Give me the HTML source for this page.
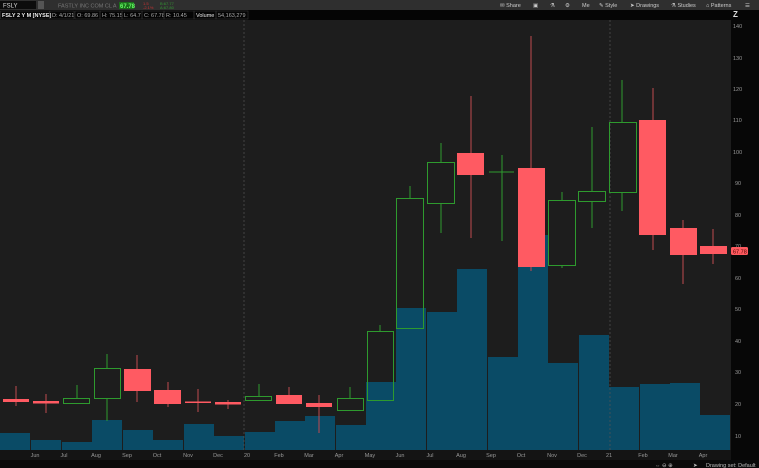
<!DOCTYPE html>
<html><head><meta charset="utf-8"><style>
html,body{margin:0;padding:0;background:#1d1d1d;width:759px;height:468px;overflow:hidden}
svg{display:block;font-family:"Liberation Sans",sans-serif}
</style></head><body>
<svg width="759" height="468" viewBox="0 0 759 468" xmlns="http://www.w3.org/2000/svg">
<rect x="0" y="0" width="759" height="468" fill="#1d1d1d"/>
<rect x="0" y="0" width="759" height="10" fill="#2f2f2f"/>
<rect x="0" y="1" width="36" height="8" fill="#0c0c0c"/>
<text x="3" y="7.5" font-size="6" fill="#ddd">FSLY</text>
<rect x="38" y="1" width="6" height="8" fill="#555"/>
<text x="58" y="7.5" font-size="5.5" fill="#777">FASTLY INC COM CL A</text>
<rect x="119" y="2" width="15" height="7" fill="#1a6e1a"/>
<text x="120" y="8" font-size="6" fill="#6f6" font-weight="bold">67.78</text>
<text x="143" y="5" font-size="4" fill="#c33">1.5</text>
<text x="143" y="9" font-size="4" fill="#c33">-2.1%</text>
<text x="160" y="5" font-size="4" fill="#393">B:67.77</text>
<text x="160" y="9" font-size="4" fill="#393">A:67.80</text>
<g font-size="5.5" fill="#ccc">
<text x="500" y="7">✉ Share</text><text x="533" y="7">▣</text><text x="550" y="7">⚗</text><text x="565" y="7">⚙</text>
<text x="582" y="7">Me</text><text x="599" y="7">✎ Style</text><text x="630" y="7">➤ Drawings</text>
<text x="671" y="7">⚗ Studies</text><text x="706" y="7">⌂ Patterns</text><text x="745" y="7">☰</text>
</g>
<rect x="0" y="10" width="759" height="10" fill="#050505"/>
<g font-size="5.5" fill="#aaa">
<text x="2" y="17" fill="#eee" font-weight="bold">FSLY 2 Y M [NYSE]</text>
<text x="52" y="17">D: 4/1/21</text><text x="77" y="17">O: 69.86</text>
<text x="102" y="17">H: 75.15</text><text x="124" y="17">L: 64.7</text>
<text x="144" y="17">C: 67.78</text><text x="166" y="17">R: 10.45</text>
<text x="196" y="17" fill="#eee">Volume</text><text x="218" y="17">54,163,279</text>
</g>
<g stroke="#333" stroke-width="0.6" fill="none">
<rect x="0.5" y="11" width="49" height="8"/><rect x="50" y="11" width="24" height="8"/><rect x="75" y="11" width="25" height="8"/><rect x="100" y="11" width="22" height="8"/><rect x="122" y="11" width="20" height="8"/><rect x="142" y="11" width="22" height="8"/><rect x="164" y="11" width="30" height="8"/><rect x="194" y="11" width="22" height="8"/><rect x="216" y="11" width="32" height="8"/>
</g>
<rect x="731" y="20" width="28" height="448" fill="#070707"/>
<text x="733" y="17" font-size="8" fill="#ddd" font-weight="bold">Z</text>
<g font-size="5.5" fill="#999">
<text x="733" y="28">140</text><text x="733" y="60">130</text><text x="733" y="91">120</text><text x="733" y="122">110</text><text x="733" y="154">100</text><text x="735" y="185">90</text><text x="735" y="217">80</text><text x="735" y="248">70</text><text x="735" y="280">60</text><text x="735" y="311">50</text><text x="735" y="343">40</text><text x="735" y="374">30</text><text x="735" y="406">20</text><text x="735" y="438">10</text>
</g>
<rect x="731" y="247" width="17" height="8" rx="1.5" fill="#ff5a5f"/>
<text x="733" y="253.5" font-size="5.5" fill="#400">67.78</text>
<g fill="#0a4b66">
<rect x="0" y="433" width="30" height="17"/><rect x="31" y="440" width="30" height="10"/><rect x="62" y="442" width="30" height="8"/><rect x="92" y="420" width="30" height="30"/><rect x="123" y="430" width="30" height="20"/><rect x="153" y="440" width="30" height="10"/><rect x="184" y="424" width="30" height="26"/><rect x="214" y="436" width="30" height="14"/><rect x="245" y="432" width="30" height="18"/><rect x="275" y="421" width="30" height="29"/><rect x="305" y="416" width="30" height="34"/><rect x="336" y="425" width="30" height="25"/><rect x="366" y="382" width="30" height="68"/>
<rect x="396" y="308" width="30" height="142"/><rect x="427" y="312" width="30" height="138"/><rect x="457" y="269" width="30" height="181"/><rect x="488" y="357" width="30" height="93"/><rect x="518" y="235" width="30" height="215"/><rect x="548" y="363" width="30" height="87"/><rect x="579" y="335" width="30" height="115"/><rect x="609" y="387" width="30" height="63"/><rect x="640" y="384" width="30" height="66"/><rect x="670" y="383" width="30" height="67"/><rect x="700" y="415" width="30" height="35"/>
</g>
<g stroke="#555" stroke-width="0.7" stroke-dasharray="2,2"><line x1="244" y1="20" x2="244" y2="450"/><line x1="610" y1="20" x2="610" y2="450"/></g>
<g stroke="#c04a50" stroke-width="1">
<line x1="16" y1="386" x2="16" y2="406"/><line x1="46" y1="394" x2="46" y2="413"/><line x1="137" y1="355" x2="137" y2="402"/><line x1="168" y1="382" x2="168" y2="407"/><line x1="198" y1="389" x2="198" y2="412"/><line x1="228" y1="400" x2="228" y2="409"/><line x1="289" y1="387" x2="289" y2="404"/><line x1="319" y1="395" x2="319" y2="433"/>
<line x1="471" y1="96" x2="471" y2="238"/><line x1="531" y1="36" x2="531" y2="271"/><line x1="653" y1="88" x2="653" y2="250"/><line x1="683" y1="220" x2="683" y2="284"/><line x1="713" y1="229" x2="713" y2="264"/>
</g>
<g fill="#ff5a62">
<rect x="3" y="399" width="26" height="3"/><rect x="33" y="401" width="26" height="2.5"/><rect x="124" y="369" width="27" height="22"/><rect x="154" y="390" width="27" height="14"/><rect x="185" y="401.5" width="26" height="1.5"/><rect x="215" y="402" width="26" height="2.5"/><rect x="276" y="395" width="26" height="9"/><rect x="306" y="403" width="26" height="4"/>
<rect x="457" y="153" width="27" height="22"/><rect x="518" y="168" width="27" height="99"/><rect x="639" y="120" width="27" height="115"/><rect x="670" y="228" width="27" height="27"/><rect x="700" y="246" width="27" height="8"/>
</g>
<g stroke="#2e9a2e" stroke-width="1" fill="none">
<line x1="77" y1="385" x2="77" y2="398"/><line x1="107" y1="354" x2="107" y2="368"/><line x1="107" y1="399" x2="107" y2="421"/><line x1="259" y1="384" x2="259" y2="396"/><line x1="350" y1="387" x2="350" y2="398"/><line x1="380" y1="325" x2="380" y2="331"/>
<line x1="410" y1="186" x2="410" y2="198"/><line x1="441" y1="143" x2="441" y2="162"/><line x1="441" y1="204" x2="441" y2="233"/><line x1="502" y1="155" x2="502" y2="241"/><line x1="562" y1="192" x2="562" y2="200"/><line x1="562" y1="266" x2="562" y2="268"/><line x1="592" y1="127" x2="592" y2="191"/><line x1="592" y1="202" x2="592" y2="228"/><line x1="622" y1="80" x2="622" y2="122"/><line x1="622" y1="193" x2="622" y2="211"/>
<rect x="63.5" y="398.5" width="26" height="5"/><rect x="94.5" y="368.5" width="26" height="30"/><rect x="245.5" y="396.5" width="26" height="4"/><rect x="337.5" y="398.5" width="26" height="12"/><rect x="367.5" y="331.5" width="26" height="69"/>
<rect x="396.5" y="198.5" width="27" height="130"/><rect x="427.5" y="162.5" width="27" height="41"/><line x1="489" y1="172" x2="514" y2="172"/><rect x="548.5" y="200.5" width="27" height="65"/><rect x="578.5" y="191.5" width="27" height="10"/><rect x="609.5" y="122.5" width="27" height="70"/>
</g>
<rect x="0" y="450" width="731" height="10" fill="#141414"/>
<g font-size="5.5" fill="#999" text-anchor="middle">
<text x="35" y="457">Jun</text><text x="64" y="457">Jul</text><text x="96" y="457">Aug</text><text x="127" y="457">Sep</text><text x="157" y="457">Oct</text><text x="188" y="457">Nov</text><text x="218" y="457">Dec</text><text x="247" y="457">20</text><text x="279" y="457">Feb</text><text x="309" y="457">Mar</text><text x="339" y="457">Apr</text><text x="370" y="457">May</text><text x="400" y="457">Jun</text><text x="430" y="457">Jul</text><text x="461" y="457">Aug</text><text x="491" y="457">Sep</text><text x="521" y="457">Oct</text><text x="552" y="457">Nov</text><text x="582" y="457">Dec</text><text x="609" y="457">21</text><text x="643" y="457">Feb</text><text x="673" y="457">Mar</text><text x="703" y="457">Apr</text>
</g>
<rect x="0" y="460" width="759" height="8" fill="#0a0a0a"/>
<g font-size="5.5" fill="#bbb"><text x="655" y="467">⇔ ⊖ ⊕</text><text x="693" y="467">➤</text><text x="706" y="467">Drawing set: Default</text></g>
</svg>
</body></html>
